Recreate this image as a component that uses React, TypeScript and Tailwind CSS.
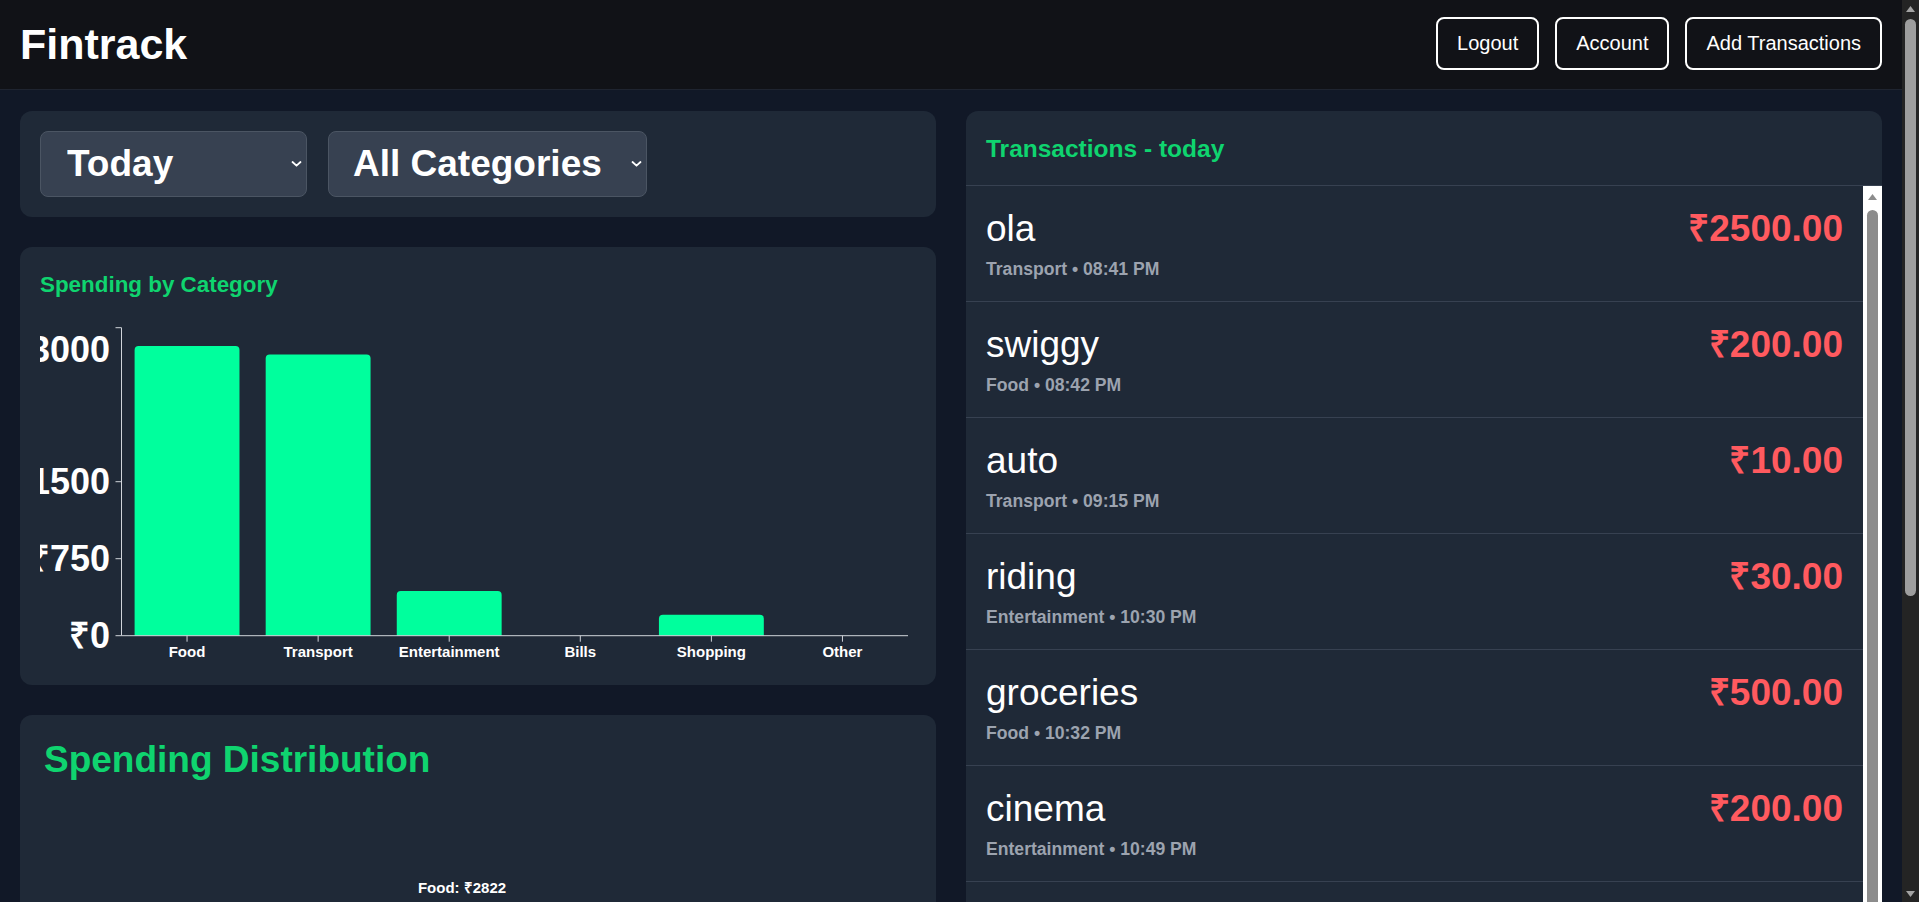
import { useState } from 'react';

type Txn = { id: number; name: string; category: string; time: string; amount: number };

const transactions: Txn[] = [
  { id: 1, name: 'ola', category: 'Transport', time: '08:41 PM', amount: 2500 },
  { id: 2, name: 'swiggy', category: 'Food', time: '08:42 PM', amount: 200 },
  { id: 3, name: 'auto', category: 'Transport', time: '09:15 PM', amount: 10 },
  { id: 4, name: 'riding', category: 'Entertainment', time: '10:30 PM', amount: 30 },
  { id: 5, name: 'groceries', category: 'Food', time: '10:32 PM', amount: 500 },
  { id: 6, name: 'cinema', category: 'Entertainment', time: '10:49 PM', amount: 200 },
  { id: 7, name: 'metro', category: 'Transport', time: '10:58 PM', amount: 230 },
  { id: 8, name: 'dinner', category: 'Food', time: '11:05 PM', amount: 2122 },
  { id: 9, name: 'arcade', category: 'Entertainment', time: '11:20 PM', amount: 205 },
  { id: 10, name: 't-shirt', category: 'Shopping', time: '11:34 PM', amount: 205 },
];

const categories = ['Food', 'Transport', 'Entertainment', 'Bills', 'Shopping', 'Other'];

const font = "font-['Liberation_Sans',Arial,sans-serif]";

function totals() {
  return categories.map((c) => ({
    name: c,
    value: transactions.filter((t) => t.category === c).reduce((s, t) => s + t.amount, 0),
  }));
}

function Chevron() {
  return (
    <svg className="pointer-events-none absolute right-[5px] top-1/2 -translate-y-1/2" width="11" height="7" viewBox="0 0 11 7">
      <path d="M1.5 1.5 L5.5 5.2 L9.5 1.5" fill="none" stroke="white" strokeWidth="1.8" strokeLinecap="round" strokeLinejoin="round" />
    </svg>
  );
}

function Arrow({ up, color }: { up: boolean; color: string }) {
  return (
    <svg width="9" height="6" viewBox="0 0 9 6" className="block">
      <path d={up ? 'M0 6 L4.5 0 L9 6 Z' : 'M0 0 L4.5 6 L9 0 Z'} fill={color} />
    </svg>
  );
}

// scrollbars are drawn by hand: the page and the list both show classic ones
function PageScrollbar() {
  return (
    <aside className="flex h-full w-[17px] shrink-0 flex-col items-center bg-[#242424]">
      <div className="flex h-[17px] items-center justify-center">
        <Arrow up color="#a3a3a3" />
      </div>
      <div className="mt-[2px] h-[577px] w-[11px] rounded-full bg-[#9e9e9e]" />
      <div className="flex-1" />
      <div className="flex h-[17px] items-center justify-center">
        <Arrow up={false} color="#a3a3a3" />
      </div>
    </aside>
  );
}

function ListScrollbar() {
  return (
    <div className="flex w-[19px] shrink-0 flex-col items-center bg-white pt-[8px]">
      <Arrow up color="#8c8c8c" />
      <div className="mt-[10px] h-[880px] w-[11px] rounded-full bg-[#8c8c8c]" />
    </div>
  );
}

function BarChart() {
  const data = totals();
  const axisX = 81.5;
  const top = 22.7;
  const base = 330.7;
  const right = 868;
  const band = (right - axisX) / data.length;
  const scale = (v: number) => (v / 3000) * (base - top);
  const yTicks = [
    { v: 3000, y: top, ly: 44 },
    { v: 1500, y: base - scale(1500), ly: base - scale(1500) },
    { v: 750, y: base - scale(750), ly: base - scale(750) },
    { v: 0, y: base, ly: base },
  ];

  return (
    <svg width="877" height="360" className="block">
      {data.map((d, i) => {
        const h = scale(d.value);
        if (h <= 0) return null;
        const x = axisX + i * band + 13.1;
        const w = band - 26.2;
        const t = base - h;
        const r = 4;
        return (
          <path
            key={d.name}
            d={`M${x},${base} V${t + r} Q${x},${t} ${x + r},${t} H${x + w - r} Q${x + w},${t} ${x + w},${t + r} V${base} Z`}
            fill="#00ff9d"
          />
        );
      })}
      <line x1={axisX} y1={top} x2={axisX} y2={base} stroke="#d1d5db" strokeWidth="1" />
      <line x1={axisX} y1={base} x2={right} y2={base} stroke="#d1d5db" strokeWidth="1" />
      {yTicks.map((t) => (
        <g key={t.v}>
          <line x1={axisX - 6} y1={t.y} x2={axisX} y2={t.y} stroke="#d1d5db" strokeWidth="1" />
          <text
            x={70}
            y={t.ly}
            textAnchor="end"
            dominantBaseline="central"
            fill="white"
            fontSize="36"
            fontWeight="700"
            fontFamily="Liberation Sans, Arial, sans-serif"
          >
            ₹{t.v}
          </text>
        </g>
      ))}
      {data.map((d, i) => {
        const cx = axisX + i * band + band / 2;
        return (
          <g key={d.name}>
            <line x1={cx} y1={base} x2={cx} y2={base + 6} stroke="#d1d5db" strokeWidth="1" />
            <text
              x={cx}
              y={base + 15.5}
              textAnchor="middle"
              dominantBaseline="central"
              fill="white"
              fontSize="15"
              fontWeight="700"
              fontFamily="Liberation Sans, Arial, sans-serif"
            >
              {d.name}
            </text>
          </g>
        );
      })}
    </svg>
  );
}

function PieChart() {
  const data = totals().filter((d) => d.value > 0);
  const colors = ['#00ff9d', '#10b981', '#3b82f6', '#f59e0b'];
  const total = data.reduce((s, d) => s + d.value, 0);
  const cx = 418;
  const cy = 290;
  const r = 175;
  let start = -(data[0].value / total) * 180;
  const pt = (deg: number, rad: number) => {
    const a = ((deg - 90) * Math.PI) / 180;
    return [cx + rad * Math.cos(a), cy + rad * Math.sin(a)];
  };

  return (
    <svg width="869" height="540" className="block">
      {data.map((d, i) => {
        const sweep = (d.value / total) * 360;
        const [x1, y1] = pt(start, r);
        const [x2, y2] = pt(start + sweep, r);
        const mid = start + sweep / 2;
        const [lx, ly] = pt(mid, r + 27);
        const large = sweep > 180 ? 1 : 0;
        start += sweep;
        return (
          <g key={d.name}>
            <path d={`M${cx},${cy} L${x1},${y1} A${r},${r} 0 ${large} 1 ${x2},${y2} Z`} fill={colors[i]} stroke="#1f2937" strokeWidth="1" />
            <text
              x={lx}
              y={ly}
              textAnchor={Math.abs(lx - cx) < 20 ? 'middle' : lx > cx ? 'start' : 'end'}
              dominantBaseline="central"
              fill="white"
              fontSize="15"
              fontWeight="700"
              fontFamily="Liberation Sans, Arial, sans-serif"
            >
              {d.name}: ₹{d.value}
            </text>
          </g>
        );
      })}
    </svg>
  );
}

export default function App() {
  const [range, setRange] = useState('today');
  const [category, setCategory] = useState('all');

  return (
    <div className={`flex h-screen overflow-hidden bg-[#111827] leading-[1.15] text-white ${font}`}>
      <div className="h-full flex-1 overflow-y-auto [scrollbar-width:none]">
        <header className="flex h-[90px] items-center justify-between border-b border-[#1f2430] bg-[#111217] px-5 pb-[2px]">
          <h1 className="mt-[2px] text-[43px] font-bold leading-none">Fintrack</h1>
          <div className="flex gap-4">
            {['Logout', 'Account', 'Add Transactions'].map((b) => (
              <button
                key={b}
                className="rounded-lg border-2 border-white bg-transparent px-[19px] py-[13px] text-[20px] leading-[23px] text-white"
              >
                {b}
              </button>
            ))}
          </div>
        </header>

        <main className="grid grid-cols-2 items-start gap-[30px] px-5 pt-[21px] pb-5">
          <div className="flex flex-col gap-[30px]">
            <div className="flex gap-[21px] rounded-xl bg-[#1f2937] p-5">
              <div className="relative">
                <select
                  value={range}
                  onChange={(e) => setRange(e.target.value)}
                  className="h-[66px] w-[267px] appearance-none rounded-lg border border-[#4b5563] bg-[#374151] pl-[26px] text-[37px] font-bold text-white"
                >
                  <option value="today">Today</option>
                  <option value="week">This Week</option>
                  <option value="month">This Month</option>
                  <option value="all">All Time</option>
                </select>
                <Chevron />
              </div>
              <div className="relative">
                <select
                  value={category}
                  onChange={(e) => setCategory(e.target.value)}
                  className="h-[66px] w-[319px] appearance-none rounded-lg border border-[#4b5563] bg-[#374151] pl-[24px] text-[37px] font-bold text-white"
                >
                  <option value="all">All Categories</option>
                  {categories.map((c) => (
                    <option key={c} value={c}>{c}</option>
                  ))}
                </select>
                <Chevron />
              </div>
            </div>

            <div className="rounded-xl bg-[#1f2937] px-5 pt-[25px] pb-5">
              <h3 className="mb-[7px] text-[22.4px] font-bold text-[#0fd46f]">Spending by Category</h3>
              <BarChart />
            </div>

            <div className="rounded-xl bg-[#1f2937] p-6">
              <h2 className="mb-[18px] text-[37px] font-bold text-[#0fd46f]">Spending Distribution</h2>
              <PieChart />
            </div>
          </div>

          <div className="overflow-hidden rounded-xl bg-[#1f2937]">
            <div className="flex h-[75px] items-center border-b border-[#374151] px-5 pt-[2px]">
              <h3 className="text-[24.5px] font-bold text-[#0fd46f]">Transactions - {range}</h3>
            </div>
            <div className="flex h-[1050px] overflow-hidden">
              <div className="flex-1 overflow-y-auto [scrollbar-width:none]">
                {transactions.map((t) => (
                  <div key={t.id} className="flex h-[116px] items-start justify-between border-b border-[#374151] px-5 pt-[22px]">
                    <div>
                      <div className="text-[37px] text-white">{t.name}</div>
                      <div className="mt-[8px] text-[17.6px] font-bold text-[#9ca3af]">
                        {t.category} • {t.time}
                      </div>
                    </div>
                    <div className="text-[37px] font-bold text-[#ff5a5f]">₹{t.amount.toFixed(2)}</div>
                  </div>
                ))}
              </div>
              <ListScrollbar />
            </div>
          </div>
        </main>
      </div>
      <PageScrollbar />
    </div>
  );
}
